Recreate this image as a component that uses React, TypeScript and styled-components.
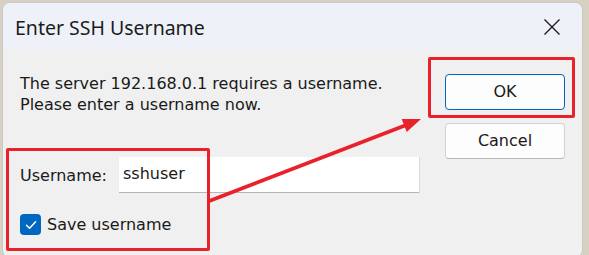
import React from "react";
import styled, { createGlobalStyle } from "styled-components";

const Global = createGlobalStyle`
  html, body { margin: 0; padding: 0; }
  body {
    background: #d8d1c1;
    width: 589px;
    height: 255px;
    overflow: hidden;
  }
`;

const Window = styled.div`
  position: relative;
  margin: 2px 0 0 2px;
  width: 581px;
  height: 256px;
  box-sizing: border-box;
  border: 1px solid #c9c9c9;
  border-radius: 8px;
  background: #f0f0f0;
  overflow: hidden;
  display: flex;
  flex-direction: column;
  font-family: "DejaVu Sans", Verdana, sans-serif;
  color: #1a1a1a;
`;

const TitleBar = styled.div`
  height: 47px;
  flex: none;
  background: #eef2f8;
  display: flex;
  align-items: center;
  justify-content: space-between;
  padding: 0 20px 0 12px;
`;

const Title = styled.div`
  font-family: "Noto Sans", "Open Sans", sans-serif;
  font-size: 19.5px;
  color: #1b1b1b;
  padding-top: 1px;
`;

const CloseButton = styled.div`
  width: 20px;
  height: 20px;
  display: flex;
  align-items: center;
  justify-content: center;
`;

const Body = styled.div`
  flex: 1;
  display: flex;
  gap: 26px;
  padding: 0 17px 0 17px;
`;

const LeftColumn = styled.div`
  flex: 1;
  display: flex;
  flex-direction: column;
`;

const Message = styled.div`
  margin-top: 23px;
  font-size: 16px;
  line-height: 21px;
`;

const FormRow = styled.div`
  margin-top: 42px;
  display: flex;
  align-items: center;
`;

const Label = styled.label`
  width: 99px;
  flex: none;
  font-size: 16px;
`;

const TextInput = styled.div`
  width: 300px;
  height: 36px;
  box-sizing: border-box;
  background: #ffffff;
  box-shadow: inset 0 -1px 0 #b5b5b5, 1px 0 0 #dadada;
  display: flex;
  align-items: center;
  padding-left: 4px;
  padding-bottom: 3px;
  font-size: 16px;
`;

const CheckRow = styled.div`
  margin-top: 21px;
  display: flex;
  align-items: center;
  gap: 6px;
  font-size: 16px;
`;

const CheckBox = styled.div`
  width: 21px;
  height: 21px;
  border-radius: 4px;
  background: #0067c0;
  display: flex;
  align-items: center;
  justify-content: center;
`;

const ButtonColumn = styled.div`
  width: 120px;
  flex: none;
  padding-top: 24px;
  display: flex;
  flex-direction: column;
  gap: 13px;
`;

const Button = styled.div<{ $primary?: boolean }>`
  height: 36px;
  box-sizing: border-box;
  border-radius: 4px;
  background: #fdfdfd;
  border: 1px solid ${(p) => (p.$primary ? "#0067c0" : "#d2d2d2")};
  border-bottom-color: ${(p) => (p.$primary ? "#0067c0" : "#b9b9b9")};
  display: flex;
  align-items: center;
  justify-content: center;
  font-size: 16px;
  padding-bottom: 1px;
`;

const Highlight = styled.div<{ $l: number; $t: number; $w: number; $h: number }>`
  position: absolute;
  left: ${(p) => p.$l}px;
  top: ${(p) => p.$t}px;
  width: ${(p) => p.$w}px;
  height: ${(p) => p.$h}px;
  box-sizing: border-box;
  border: 3px solid #e8212b;
  border-radius: 2px;
  pointer-events: none;
`;

const Overlay = styled.svg`
  position: absolute;
  left: 0;
  top: 0;
  pointer-events: none;
`;

export default function App() {
  return (
    <>
      <Global />
      <Window>
        <TitleBar>
          <Title>Enter SSH Username</Title>
          <CloseButton>
            <svg width="18" height="18" viewBox="0 0 18 18">
              <path d="M1.5 1.5 L16.5 16.5 M16.5 1.5 L1.5 16.5" stroke="#1b1b1b" strokeWidth="1.4" />
            </svg>
          </CloseButton>
        </TitleBar>
        <Body>
          <LeftColumn>
            <Message>
              The server 192.168.0.1 requires a username.
              <br />
              Please enter a username now.
            </Message>
            <FormRow>
              <Label>Username:</Label>
              <TextInput>sshuser</TextInput>
            </FormRow>
            <CheckRow>
              <CheckBox>
                <svg width="14" height="14" viewBox="0 0 14 14">
                  <path d="M2.5 7.2 L5.6 10.2 L11.6 3.8" fill="none" stroke="#ffffff" strokeWidth="1.5" strokeLinecap="round" strokeLinejoin="round" />
                </svg>
              </CheckBox>
              Save username
            </CheckRow>
          </LeftColumn>
          <ButtonColumn>
            <Button $primary>OK</Button>
            <Button>Cancel</Button>
          </ButtonColumn>
        </Body>
        <Highlight $l={3} $t={145} $w={204} $h={103} />
        <Highlight $l={425} $t={54} $w={147} $h={61} />
        <Overlay width="581" height="256" viewBox="0 0 581 256">
          <line x1="205" y1="198.5" x2="402" y2="122.5" stroke="#e8212b" strokeWidth="3.5" />
          <polygon points="418,116 403.7,129 398.7,116" fill="#e8212b" />
        </Overlay>
      </Window>
    </>
  );
}
